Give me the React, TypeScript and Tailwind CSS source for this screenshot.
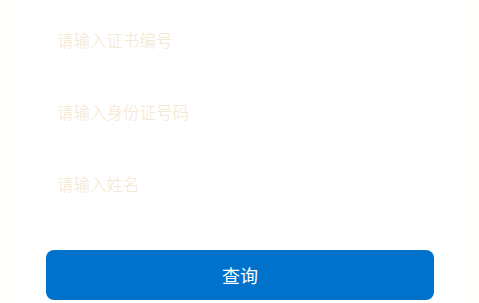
import React from "react";

export default function App() {
  const fields = ["请输入证书编号", "请输入身份证号码", "请输入姓名"];
  return (
    <div
      className="w-[479px] h-[303px] bg-[#fefefd] overflow-hidden"
      style={{ fontFamily: '"Noto Sans CJK SC", "Noto Sans", sans-serif' }}
    >
      <div className="mx-[18px] h-full bg-white pt-[4px]">
        {fields.map((f) => (
          <div key={f} className="h-[72px] flex items-center pl-[39px]">
            <input
              className="w-full bg-transparent outline-none text-[16.5px] font-light text-[#333] placeholder:text-[#f3e6cd]"
              placeholder={f}
            />
          </div>
        ))}
        <div className="pt-[30px] pl-[28px] pr-[27px]">
          <button className="w-full h-[50px] rounded-[8px] bg-[#0072cc] text-white text-[18px] flex items-center justify-center">
            查询
          </button>
        </div>
      </div>
    </div>
  );
}
